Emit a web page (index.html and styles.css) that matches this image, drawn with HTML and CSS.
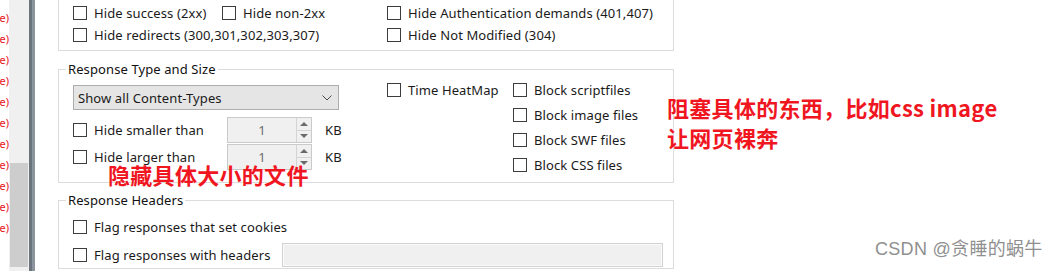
FILE: index.html
```html
<!DOCTYPE html>
<html lang="zh-CN">
<head>
    <meta charset="UTF-8">
    <title>Filters</title>
    <link rel="stylesheet" href="styles.css">
</head>
<body>
    <div class="window">
        <div class="list-pane">
            <div class="list-text">
                <div class="list-line">e)</div>
                <div class="list-line">e)</div>
                <div class="list-line">e)</div>
                <div class="list-line">e)</div>
                <div class="list-line">e)</div>
                <div class="list-line">e)</div>
                <div class="list-line">e)</div>
                <div class="list-line">e)</div>
                <div class="list-line">e)</div>
                <div class="list-line">e)</div>
                <div class="list-line">e)</div>
            </div>
            <div class="scrollbar"><div class="thumb"></div></div>
        </div>
        <div class="splitter"></div>

        <div class="main">
            <!-- status codes, top cut off -->
            <div class="group group-status">
                <div class="cols">
                    <div class="col-left">
                        <div class="check-row">
                            <label class="check w-success"><span class="box"></span>Hide success (2xx)</label>
                            <label class="check"><span class="box"></span>Hide non-2xx</label>
                        </div>
                        <label class="check"><span class="box"></span>Hide redirects (300,301,302,303,307)</label>
                    </div>
                    <div class="col-right">
                        <label class="check"><span class="box"></span>Hide Authentication demands (401,407)</label>
                        <label class="check"><span class="box"></span>Hide Not Modified (304)</label>
                    </div>
                </div>
            </div>

            <fieldset class="group group-type">
                <legend>Response Type and Size</legend>
                <div class="cols">
                    <div class="col-left type-left">
                        <div class="select">
                            <span>Show all Content-Types</span>
                            <svg width="10" height="6" viewBox="0 0 10 6"><polyline points="0.5,0.5 5,5 9.5,0.5" fill="none" stroke="#4a4a4a" stroke-width="1"/></svg>
                        </div>
                        <div class="size-rows">
                            <div class="size-row">
                                <label class="check size-label"><span class="box"></span>Hide smaller than</label>
                                <div class="spin">
                                    <span class="spin-value">1</span>
                                    <span class="spin-btns"><span class="arrow-up"></span><span class="arrow-down"></span></span>
                                </div>
                                <span class="unit">KB</span>
                            </div>
                            <div class="size-row">
                                <label class="check size-label"><span class="box"></span>Hide larger than</label>
                                <div class="spin">
                                    <span class="spin-value">1</span>
                                    <span class="spin-btns"><span class="arrow-up"></span><span class="arrow-down"></span></span>
                                </div>
                                <span class="unit">KB</span>
                            </div>
                        </div>
                    </div>
                    <div class="col-right type-right">
                        <div class="heat-col">
                            <label class="check tall"><span class="box"></span>Time HeatMap</label>
                        </div>
                        <div class="block-col">
                            <label class="check tall"><span class="box"></span>Block scriptfiles</label>
                            <label class="check tall"><span class="box"></span>Block image files</label>
                            <label class="check tall"><span class="box"></span>Block SWF files</label>
                            <label class="check tall"><span class="box"></span>Block CSS files</label>
                        </div>
                    </div>
                </div>
            </fieldset>

            <fieldset class="group group-headers">
                <legend>Response Headers</legend>
                <div class="header-rows">
                    <label class="check head-row"><span class="box"></span>Flag responses that set cookies</label>
                    <div class="head-row">
                        <label class="check head-label"><span class="box"></span>Flag responses with headers</label>
                        <div class="text-input"></div>
                    </div>
                </div>
            </fieldset>

            <p class="note note-size">隐藏具体大小的文件</p>
            <p class="note note-block">阻塞具体的东西，比如css image<br>让网页裸奔</p>
        </div>

        <div class="watermark">CSDN @贪睡的蜗牛</div>
    </div>
</body>
</html>
```

FILE: styles.css
```css
* {
    box-sizing: border-box;
}
html, body {
    margin: 0;
}
body {
    width: 1061px;
    height: 271px;
    overflow: hidden;
    background: #fff;
    font-family: "Noto Sans", "Open Sans", sans-serif;
    font-size: 13px;
    letter-spacing: 0.1px;
    color: #1a1a1a;
}
.window {
    display: flex;
    height: 271px;
    position: relative;
}

/* session list on the left */
.list-pane {
    display: flex;
    width: 29px;
    flex: none;
}
.list-text {
    width: 9px;
    overflow: hidden;
    padding-top: 7px;
    color: #e8141c;
    font-size: 11px;
    letter-spacing: 0;
    line-height: 21px;
}
.list-line {
    display: flex;
    justify-content: flex-end;
    white-space: nowrap;
}
.scrollbar {
    width: 20px;
    background: #f0f0f0;
    display: flex;
    flex-direction: column;
    justify-content: flex-end;
    padding: 0 1px 4px;
}
.thumb {
    height: 104px;
    background: #cdcdcd;
}
.splitter {
    width: 6px;
    flex: none;
    background: linear-gradient(to right, #6b747d 0, #6b747d 45%, #8c949d 45%);
}

/* filter panel */
.main {
    flex: 1;
    position: relative;
    padding-left: 23px;
}
.group {
    width: 616px;
    margin: 0;
    border: 1px solid #dcdcdc;
    padding: 0 0 0 14px;
    min-width: 0;
}
.group legend {
    padding: 0 2px;
    margin-left: -7px;
    line-height: 16px;
    color: #111;
}
.group-status {
    border-top: none;
    padding-top: 2px;
    padding-bottom: 4px;
}
.cols {
    display: flex;
}
.col-left {
    width: 314px;
    flex: none;
}
.check {
    display: flex;
    align-items: center;
    gap: 7px;
    height: 22px;
    white-space: nowrap;
}
.check.tall {
    height: 25px;
}
.box {
    width: 14px;
    height: 14px;
    flex: none;
    border: 1px solid #3c3c3c;
    background: #fff;
}
.check-row {
    display: flex;
}
.w-success {
    width: 149px;
}

.group-type {
    margin-top: 10px;
    padding-bottom: 5px;
}
.type-left {
    padding-top: 8px;
}
.select {
    width: 266px;
    height: 25px;
    display: flex;
    align-items: center;
    justify-content: space-between;
    padding: 0 6px 0 4px;
    background: #e5e5e5;
    border: 1px solid #adadad;
}
.size-rows {
    display: flex;
    flex-direction: column;
    gap: 1px;
    margin-top: 7px;
}
.size-row {
    display: flex;
    align-items: center;
    height: 26px;
}
.size-label {
    width: 154px;
}
.spin {
    width: 85px;
    height: 26px;
    display: flex;
    border: 1px solid #cacaca;
    background: #f0f0f0;
}
.spin-value {
    flex: 1;
    display: flex;
    align-items: center;
    justify-content: center;
    color: #6d6d6d;
}
.spin-btns {
    width: 15px;
    display: flex;
    flex-direction: column;
    border-left: 1px solid #d4d4d4;
}
.arrow-up, .arrow-down {
    flex: 1;
    display: flex;
    align-items: center;
    justify-content: center;
}
.arrow-up {
    border-bottom: 1px solid #d4d4d4;
}
.arrow-up::before {
    content: "";
    border-left: 4px solid transparent;
    border-right: 4px solid transparent;
    border-bottom: 4px solid #6a6a6a;
}
.arrow-down::before {
    content: "";
    border-left: 4px solid transparent;
    border-right: 4px solid transparent;
    border-top: 4px solid #6a6a6a;
}
.unit {
    margin-left: 13px;
}
.type-right {
    display: flex;
}
.heat-col {
    width: 126px;
}

.group-headers {
    margin-top: 9px;
}
.header-rows {
    display: flex;
    flex-direction: column;
    gap: 2px;
    padding-top: 6px;
}
.head-row {
    display: flex;
    align-items: center;
    height: 26px;
}
.head-label {
    width: 209px;
}
.text-input {
    width: 381px;
    height: 24px;
    background: #f0f0f0;
    border: 1px solid #d2d2d2;
    box-shadow: inset 0 0 0 1px #fafafa;
}

/* red annotations drawn over the screenshot */
.note {
    position: absolute;
    margin: 0;
    font-family: "Noto Sans CJK SC", sans-serif;
    font-weight: bold;
    font-size: 22px;
    letter-spacing: 0.3px;
    line-height: 30px;
    color: #f0161f;
    white-space: nowrap;
}
.note-size {
    left: 73px;
    top: 159px;
}
.note-block {
    left: 632px;
    top: 92px;
}
.watermark {
    position: absolute;
    left: 875px;
    top: 236px;
    font-family: "Liberation Sans", "Noto Sans CJK SC", sans-serif;
    font-size: 18px;
    letter-spacing: 0.3px;
    line-height: 26px;
    color: #8f8f8f;
    white-space: nowrap;
}
```
